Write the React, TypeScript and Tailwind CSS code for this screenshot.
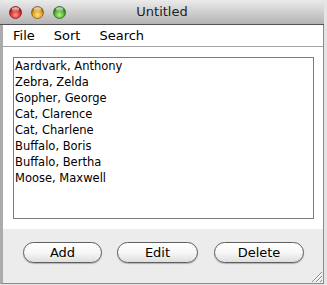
import React from 'react';

const names = [
  'Aardvark, Anthony',
  'Zebra, Zelda',
  'Gopher, George',
  'Cat, Clarence',
  'Cat, Charlene',
  'Buffalo, Boris',
  'Buffalo, Bertha',
  'Moose, Maxwell',
];

const Light: React.FC<{ id: string; base: string; dark: string; light: string }> = ({ id, base, dark, light }) => (
  <svg width="13" height="13" viewBox="0 0 13 13">
    <defs>
      <radialGradient id={`${id}-g`} cx="50%" cy="70%" r="60%">
        <stop offset="0%" stopColor={light} />
        <stop offset="60%" stopColor={base} />
        <stop offset="100%" stopColor={dark} />
      </radialGradient>
      <linearGradient id={`${id}-h`} x1="0" y1="0" x2="0" y2="1">
        <stop offset="0%" stopColor="#ffffff" stopOpacity="0.9" />
        <stop offset="100%" stopColor="#ffffff" stopOpacity="0" />
      </linearGradient>
    </defs>
    <circle cx="6.5" cy="6.5" r="6" fill={`url(#${id}-g)`} stroke={dark} strokeWidth="0.8" />
    <ellipse cx="6.5" cy="3.6" rx="3.8" ry="2.4" fill={`url(#${id}-h)`} />
  </svg>
);

const Button: React.FC<{ label: string; width: string }> = ({ label, width }) => (
  <button
    className={`${width} h-[21px] rounded-full border border-[#5e5e5e] bg-gradient-to-b from-white via-[#f7f7f7] to-[#dedede] shadow-[0_1px_1px_rgba(0,0,0,0.25)] text-[13px] leading-none text-black`}
  >
    {label}
  </button>
);

export default function App() {
  return (
    <div
      className="w-[327px] h-[285px] bg-[#e4e4e4] overflow-hidden"
      style={{ fontFamily: '"DejaVu Sans", "Liberation Sans", sans-serif' }}
    >
      <div className="w-[324px] h-[284px] flex flex-col">
        {/* title bar */}
        <div className="relative h-[25px] shrink-0 rounded-t-[5px] border-b border-[#525252] bg-gradient-to-b from-[#ebebeb] to-[#b4b4b4] flex items-center pl-[9px] gap-[9px]">
          <Light id="r" base="#e0393b" dark="#8e1417" light="#ff9a8c" />
          <Light id="o" base="#e9a526" dark="#92600d" light="#ffe28a" />
          <Light id="g" base="#56b83a" dark="#276d14" light="#b6f087" />
          <span className="absolute left-0 right-0 text-center text-[13px] text-[#1e1e1e] pointer-events-none">
            Untitled
          </span>
        </div>

        {/* body */}
        <div className="flex-1 flex flex-col border-l-[3px] border-l-[#ababab] border-r border-r-[#8c8c8c] border-b border-b-[#8a8a8a]">
          <div className="h-[22px] shrink-0 bg-white border-b border-[#a3a3a3] flex items-center pl-[10px] gap-[19px] text-[13px] text-black">
            <span>File</span>
            <span>Sort</span>
            <span>Search</span>
          </div>

          <div className="h-[182px] shrink-0 bg-white pt-[10px] pl-[10px] pr-[9px] pb-[10px]">
            <div className="h-[162px] border border-[#7c7c7c] bg-white pl-px pt-px">
              {names.map((n) => (
                <div key={n} className="h-[16px] flex items-center text-[11.5px] text-black">
                  {n}
                </div>
              ))}
            </div>
          </div>

          <div className="relative flex-1 bg-[#ececec] pt-[13px] pl-[20px] flex items-start">
            <Button label="Add" width="w-[79px]" />
            <div className="w-[15px]" />
            <Button label="Edit" width="w-[81px]" />
            <div className="w-[16px]" />
            <Button label="Delete" width="w-[90px]" />
            <svg className="absolute right-0 bottom-0" width="13" height="13" viewBox="0 0 13 13">
              <line x1="12" y1="2" x2="2" y2="12" stroke="#8a8a8a" strokeWidth="1" />
              <line x1="12" y1="6" x2="6" y2="12" stroke="#8a8a8a" strokeWidth="1" />
              <line x1="12" y1="10" x2="10" y2="12" stroke="#8a8a8a" strokeWidth="1" />
              <line x1="12" y1="3" x2="3" y2="12" stroke="#ffffff" strokeWidth="1" />
              <line x1="12" y1="7" x2="7" y2="12" stroke="#ffffff" strokeWidth="1" />
            </svg>
          </div>
        </div>
      </div>
    </div>
  );
}
